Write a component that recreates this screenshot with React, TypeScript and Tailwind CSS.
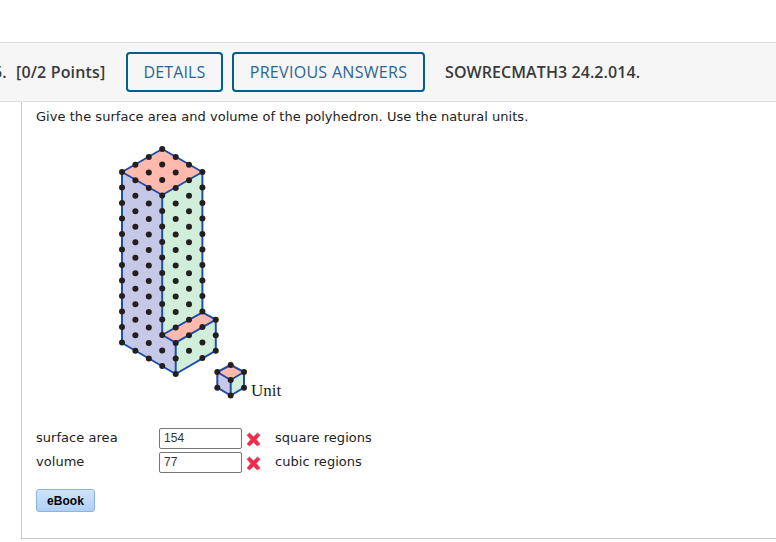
const columns = [
    { x: 122, from: 172, to: 343 },
    { x: 135.4, from: 164.7, to: 351 },
    { x: 148.8, from: 157, to: 359 },
    { x: 162.2, from: 149, to: 366 },
    { x: 175.7, from: 157, to: 375 },
    { x: 189, from: 164.7, to: 366 },
    { x: 202.4, from: 172, to: 359 },
    { x: 215.8, from: 319.7, to: 351 },
];

const dots: { x: number; y: number }[] = [];
columns.forEach((col) => {
    for (let y = col.from; y <= col.to; y += 15.5) {
        dots.push({ x: col.x, y });
    }
});

const cubeDots = [
    [230.7, 365],
    [217.3, 372],
    [244, 372],
    [230.7, 380],
    [217.3, 387.7],
    [244, 387.7],
    [230.7, 395.5],
];

function Polyhedron() {
    return (
        <svg width="190" height="276" viewBox="110 140 190 276" className="block">
            {/* faces */}
            <polygon points="122,172 162.2,195 162.2,335 175.7,342.7 175.7,374 122,343" fill="#c5c8e6" />
            <polygon points="162.2,195 202.4,172 202.4,312.3 162.2,335" fill="#d0eeda" />
            <polygon points="175.7,342.7 215.8,319.7 215.8,350.7 175.7,374" fill="#d0eeda" />
            <polygon points="162.2,149 202.4,172 162.2,195 122,172" fill="#ffb9ad" />
            <polygon points="162.2,335 202.4,312.3 215.8,319.7 175.7,342.7" fill="#ffb9ad" />

            {/* edges */}
            <g fill="none" stroke="#1f4ea8" strokeWidth="2" strokeLinejoin="round">
                <polygon points="162.2,149 202.4,172 162.2,195 122,172" />
                <polyline points="122,172 122,343 175.7,374 215.8,350.7 215.8,319.7 202.4,312.3 162.2,335 175.7,342.7 215.8,319.7" />
                <line x1="162.2" y1="195" x2="162.2" y2="335" />
                <line x1="202.4" y1="172" x2="202.4" y2="312.3" />
                <line x1="175.7" y1="342.7" x2="175.7" y2="374" />
            </g>

            {dots.map((dot, index) => (
                <circle key={index} cx={dot.x} cy={dot.y} r="3" fill="#231f20" />
            ))}

            {/* unit cube */}
            <polygon points="217.3,372 230.7,380 230.7,395.5 217.3,387.7" fill="#c5c8e6" />
            <polygon points="244,372 230.7,380 230.7,395.5 244,387.7" fill="#d0eeda" />
            <polygon points="230.7,365 244,372 230.7,380 217.3,372" fill="#ffb9ad" />
            <g fill="none" stroke="#1f4ea8" strokeWidth="2" strokeLinejoin="round">
                <polygon points="230.7,365 244,372 244,387.7 230.7,395.5 217.3,387.7 217.3,372" />
                <polyline points="217.3,372 230.7,380 244,372" />
                <line x1="230.7" y1="380" x2="230.7" y2="395.5" />
            </g>
            {cubeDots.map((dot, index) => (
                <circle key={index} cx={dot[0]} cy={dot[1]} r="3" fill="#231f20" />
            ))}

            <text x="251" y="396" fontSize="17" fill="#231f20" fontFamily="'Liberation Serif', serif">
                Unit
            </text>
        </svg>
    );
}

function RedX() {
    return (
        <svg width="15" height="15" viewBox="0 0 15 15" className="shrink-0 block">
            <path
                d="M1 3.2 3.4 1 7.5 4.8 11.6 1 14 3.2 10.2 7.5 14 12 11.4 14 7.5 10.2 3.6 14 1 12 4.8 7.5Z"
                fill="#ee2c4c"
                stroke="#ee2c4c"
                strokeWidth="0.6"
                strokeLinejoin="round"
            />
        </svg>
    );
}

function AnswerRow({ label, value, unit }: { label: string; value: string; unit: string }) {
    return (
        <div className="flex items-center h-[24px]">
            <span className="w-[123px] shrink-0">{label}</span>
            <input
                readOnly
                value={value}
                className="w-[83px] h-[21px] shrink-0 border border-[#767676] rounded-[2px] bg-white px-[4px] text-[12px] text-[#333333] outline-none font-['Liberation_Sans',sans-serif]"
            />
            <span className="ml-[4px] mt-[3px]">
                <RedX />
            </span>
            <span className="ml-[14px]">{unit}</span>
        </div>
    );
}

export default function App() {
    return (
        <div className="w-[776px] h-[542px] bg-white overflow-hidden pt-[42px] font-['DejaVu_Sans',sans-serif] text-[13px] tracking-[0.04px] text-[#222222]">
            {/* Question header */}
            <div className="h-[60px] bg-[#f6f6f6] border-y border-[#dddddd] flex items-center font-['Open_Sans',sans-serif] text-[16px] font-semibold text-[#3a3a3a] tracking-[0.08px]">
                <span className="ml-[-7px] w-[23px] shrink-0">5.</span>
                <span className="w-[110px] shrink-0 tracking-[0.15px]">[0/2 Points]</span>
                <div className="h-[40px] w-[97px] shrink-0 border-2 border-[#005f8f] rounded-[4px] flex items-center justify-center font-normal text-[#2a6496] tracking-[0.15px]">
                    DETAILS
                </div>
                <div className="ml-[9px] h-[40px] w-[193px] shrink-0 border-2 border-[#005f8f] rounded-[4px] flex items-center justify-center font-normal text-[#2a6496] tracking-[0.3px]">
                    PREVIOUS ANSWERS
                </div>
                <span className="ml-[20px]">SOWRECMATH3 24.2.014.</span>
            </div>

            {/* Question body */}
            <div className="ml-[21px] h-[437px] border-l border-b border-[#cccccc] pl-[14px]">
                <p className="pt-[7px] leading-[16px]">
                    Give the surface area and volume of the polyhedron. Use the natural units.
                </p>
                <div className="ml-[74px] mt-[15px]">
                    <Polyhedron />
                </div>
                <div className="mt-[10px]">
                    <AnswerRow label="surface area" value="154" unit="square regions" />
                    <AnswerRow label="volume" value="77" unit="cubic regions" />
                </div>
                <button className="mt-[15px] block w-[59px] h-[23px] rounded-[3px] border border-[#8fb4dc] bg-gradient-to-b from-[#cfe3fa] to-[#aed0f5] font-['Liberation_Sans',sans-serif] text-[12px] font-bold text-black">
                    eBook
                </button>
            </div>
        </div>
    );
}
